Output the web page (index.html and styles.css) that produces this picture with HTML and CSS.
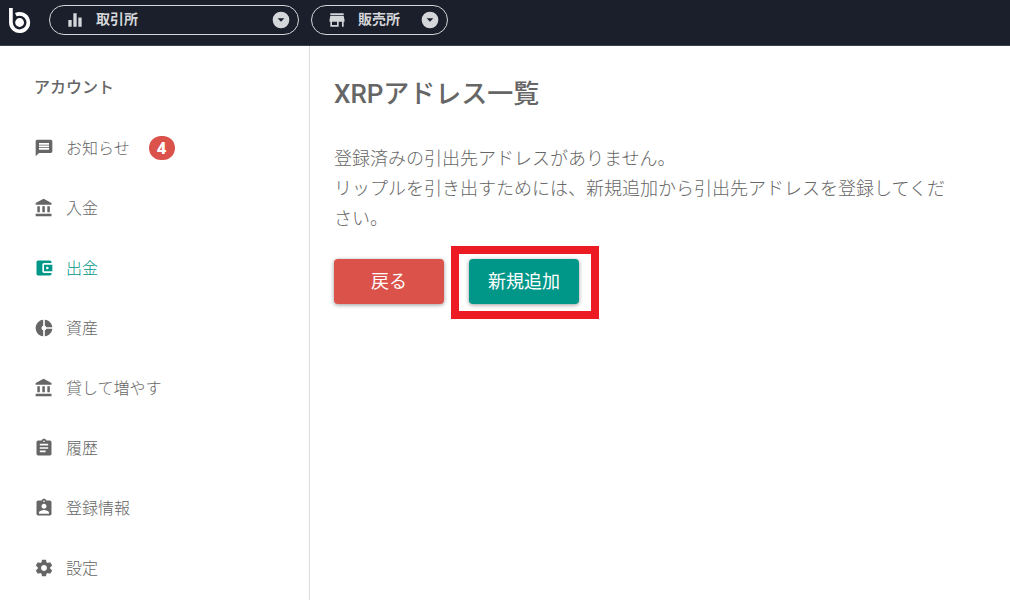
FILE: index.html
```html
<!DOCTYPE html>
<html lang="ja">

<head>
    <meta charset="UTF-8">
    <meta name="viewport" content="width=device-width, initial-scale=1.0">
    <title>XRPアドレス一覧</title>
    <link rel="stylesheet" href="styles.css">
</head>

<body>
    <header class="header">
        <a href="#" class="logo" aria-label="ホーム">
            <svg width="22" height="26" viewBox="0 0 22 26">
                <path d="M1.900 0V14.500A8.700 8.700 0 1 0 6.800 6.700" fill="none" stroke="#fff" stroke-width="3.700" />
                <circle cx="10.600" cy="14.500" r="4.400" fill="#fff" />
            </svg>
        </a>
        <button type="button" class="switch switch-wide">
            <svg class="icon" viewBox="0 0 24 24"><path d="M10 20h4V4h-4v16zm-6 0h4v-8H4v8zM16 9v11h4V9h-4z" /></svg>
            <span class="switch-label">取引所</span>
            <svg class="icon" viewBox="0 0 24 24"><path d="M12 2a10 10 0 1 0 0 20 10 10 0 0 0 0-20zm0 12l-4-4h8l-4 4z" /></svg>
        </button>
        <button type="button" class="switch">
            <svg class="icon" viewBox="0 0 24 24"><path d="M20 4H4v2h16V4zm1 10v-2l-1-5H4l-1 5v2h1v6h10v-6h4v6h2v-6h1zm-9 4H6v-4h6v4z" /></svg>
            <span class="switch-label">販売所</span>
            <svg class="icon" viewBox="0 0 24 24"><path d="M12 2a10 10 0 1 0 0 20 10 10 0 0 0 0-20zm0 12l-4-4h8l-4 4z" /></svg>
        </button>
    </header>

    <div class="page">
        <!-- Sidebar -->
        <nav class="sidebar">
            <h2 class="sidebar-title">アカウント</h2>
            <a href="#" class="menu-item">
                <svg class="icon" viewBox="0 0 24 24"><path d="M20 2H4c-1.1 0-1.99.9-1.99 2L2 22l4-4h14c1.1 0 2-.9 2-2V4c0-1.1-.9-2-2-2zm-2 12H6v-2h12v2zm0-3H6V9h12v2zm0-3H6V6h12v2z" /></svg>
                <span class="menu-label">お知らせ</span>
                <span class="badge">4</span>
            </a>
            <a href="#" class="menu-item">
                <svg class="icon" viewBox="0 0 24 24"><path d="M4 10v7h3v-7H4zm6 0v7h3v-7h-3zM2 22h19v-3H2v3zm14-12v7h3v-7h-3zm-4.500-9L2 6v2h19V6l-9.500-5z" /></svg>
                <span class="menu-label">入金</span>
            </a>
            <a href="#" class="menu-item active">
                <svg class="icon" viewBox="0 0 24 24"><path d="M21 18v1c0 1.100-.9 2-2 2H5c-1.110 0-2-.9-2-2V5c0-1.100.89-2 2-2h14c1.100 0 2 .9 2 2v1h-9c-1.110 0-2 .9-2 2v8c0 1.100.89 2 2 2h9zm-9-2h10V8H12v8zm4-2.500c-.83 0-1.500-.67-1.500-1.500s.67-1.500 1.500-1.500 1.500.67 1.500 1.500-.67 1.500-1.500 1.500z" /></svg>
                <span class="menu-label">出金</span>
            </a>
            <a href="#" class="menu-item">
                <svg class="icon" viewBox="0 0 24 24"><path d="M11 9.160V2c-5 .5-9 4.790-9 10s4 9.500 9 10v-7.160c-1-.41-2-1.520-2-2.840s1-2.430 2-2.840zM14.860 11H22c-.48-4.750-4-8.530-9-9v7.160c1 .3 1.520.98 1.860 1.840zM13 14.840V22c5-.47 8.520-4.250 9-9h-7.140c-.34.86-.86 1.540-1.860 1.840z" /></svg>
                <span class="menu-label">資産</span>
            </a>
            <a href="#" class="menu-item">
                <svg class="icon" viewBox="0 0 24 24"><path d="M4 10v7h3v-7H4zm6 0v7h3v-7h-3zM2 22h19v-3H2v3zm14-12v7h3v-7h-3zm-4.500-9L2 6v2h19V6l-9.500-5z" /></svg>
                <span class="menu-label">貸して増やす</span>
            </a>
            <a href="#" class="menu-item">
                <svg class="icon" viewBox="0 0 24 24"><path d="M19 3h-4.180C14.400 1.840 13.300 1 12 1c-1.300 0-2.400.84-2.820 2H5c-1.100 0-2 .9-2 2v14c0 1.100.9 2 2 2h14c1.100 0 2-.9 2-2V5c0-1.100-.9-2-2-2zm-7 0c.55 0 1 .45 1 1s-.45 1-1 1-1-.45-1-1 .45-1 1-1zm2 14H7v-2h7v2zm3-4H7v-2h10v2zm0-4H7V7h10v2z" /></svg>
                <span class="menu-label">履歴</span>
            </a>
            <a href="#" class="menu-item">
                <svg class="icon" viewBox="0 0 24 24"><path d="M19 3h-4.180C14.400 1.840 13.300 1 12 1c-1.300 0-2.400.84-2.820 2H5c-1.100 0-2 .9-2 2v14c0 1.100.9 2 2 2h14c1.100 0 2-.9 2-2V5c0-1.100-.9-2-2-2zm-7 0c.55 0 1 .45 1 1s-.45 1-1 1-1-.45-1-1 .45-1 1-1zm0 4c1.660 0 3 1.340 3 3s-1.340 3-3 3-3-1.340-3-3 1.340-3 3-3zm6 12H6v-1.400c0-2 4-3.100 6-3.100s6 1.100 6 3.100V19z" /></svg>
                <span class="menu-label">登録情報</span>
            </a>
            <a href="#" class="menu-item">
                <svg class="icon" viewBox="0 0 24 24"><path d="M19.430 12.980c.04-.32.07-.64.07-.98s-.03-.66-.07-.98l2.110-1.650c.19-.15.24-.42.12-.64l-2-3.460c-.12-.22-.39-.3-.61-.22l-2.490 1c-.52-.4-1.080-.73-1.690-.98l-.38-2.650C14.460 2.180 14.250 2 14 2h-4c-.25 0-.46.18-.49.42l-.38 2.650c-.61.25-1.170.59-1.690.98l-2.490-1c-.23-.09-.49 0-.61.22l-2 3.460c-.13.22-.07.49.12.64l2.110 1.650c-.04.32-.07.65-.07.98s.03.66.07.98l-2.110 1.650c-.19.15-.24.42-.12.64l2 3.460c.12.22.39.3.61.22l2.490-1c.52.4 1.080.73 1.690.98l.38 2.650c.03.24.24.42.49.42h4c.25 0 .46-.18.49-.42l.38-2.650c.61-.25 1.170-.59 1.690-.98l2.490 1c.23.09.49 0 .61-.22l2-3.460c.12-.22.07-.49-.12-.64l-2.110-1.650zM12 15.500c-1.930 0-3.500-1.570-3.500-3.500s1.570-3.500 3.500-3.500 3.500 1.570 3.500 3.500-1.570 3.500-3.500 3.500z" /></svg>
                <span class="menu-label">設定</span>
            </a>
        </nav>

        <!-- Address list -->
        <main class="content">
            <h1 class="content-title">XRPアドレス一覧</h1>
            <p class="message">登録済みの引出先アドレスがありません。<br>リップルを引き出すためには、新規追加から引出先アドレスを登録してください。</p>
            <div class="actions">
                <button type="button" class="btn btn-back">戻る</button>
                <button type="button" class="btn btn-add">新規追加</button>
            </div>
        </main>
    </div>
</body>

</html>
```
FILE: styles.css
```css
* {
    box-sizing: border-box;
}

body {
    margin: 0;
    min-height: 100vh;
    display: flex;
    flex-direction: column;
    font-family: Roboto, "Noto Sans CJK JP", sans-serif;
    font-weight: 300;
    color: #666;
    background-color: #fff;
}

.icon {
    width: 20px;
    height: 20px;
    flex: none;
    fill: currentColor;
}

/* Header */
.header {
    display: flex;
    gap: 12px;
    height: 46px;
    padding: 5px 9px;
    background-color: #1a1f2b;
    border-bottom: 1px solid #3a3f4a;
}

.logo {
    width: 28px;
    padding-top: 3px;
}

.logo svg {
    display: block;
}

.switch {
    display: flex;
    align-items: center;
    height: 30px;
    padding: 0 7px 0 15px;
    border: 1px solid #d5d6da;
    border-radius: 15px;
    background: none;
    color: #d5d6da;
    font-family: inherit;
    font-size: 14px;
    font-weight: 700;
    line-height: 20px;
    cursor: pointer;
}

.switch-wide {
    width: 250px;
}

.switch-label {
    flex: 1;
    padding: 0 20px 3px 11px;
    text-align: left;
}

/* Layout */
.page {
    flex: 1;
    display: flex;
}

.sidebar {
    width: 310px;
    flex: none;
    padding: 12px 34px 0;
    border-right: 1px solid #ddd;
}

.sidebar-title {
    margin: 0;
    font-size: 16px;
    font-weight: 500;
    line-height: 60px;
}

.menu-item {
    display: flex;
    align-items: center;
    gap: 12px;
    height: 60px;
    color: #666;
    font-size: 16px;
    line-height: 24px;
    text-decoration: none;
}

.menu-item.active {
    color: #009688;
}

.menu-label {
    padding-top: 2px;
}

.badge {
    margin-left: 7px;
    width: 26px;
    border-radius: 12px;
    background-color: #db524b;
    color: #fff;
    font-family: "Noto Sans", sans-serif;
    font-weight: 800;
    text-align: center;
}

/* Content */
.content {
    flex: 1;
    padding: 28px 54px 28px 24px;
}

.content-title {
    margin: 0 0 30px;
    font-size: 26px;
    font-weight: 500;
    line-height: 40px;
}

.message {
    margin: 0 0 25px;
    font-size: 18px;
    line-height: 30px;
}

.actions {
    display: flex;
    gap: 25px;
}

.btn {
    position: relative;
    width: 110px;
    height: 45px;
    padding: 0 0 3px;
    border: none;
    border-radius: 4px;
    color: #fff;
    font-family: inherit;
    font-size: 18px;
    font-weight: 400;
    box-shadow: 0 1px 4px rgba(0, 0, 0, 0.4);
    cursor: pointer;
}

.btn-back {
    background-color: #db524b;
}

.btn-add {
    background-color: #009688;
}

/* Red frame that points out the button */
.btn-add::after {
    content: "";
    position: absolute;
    inset: -13px -20px -15px -18px;
    border: 8px solid #ed1c24;
    pointer-events: none;
}
```
